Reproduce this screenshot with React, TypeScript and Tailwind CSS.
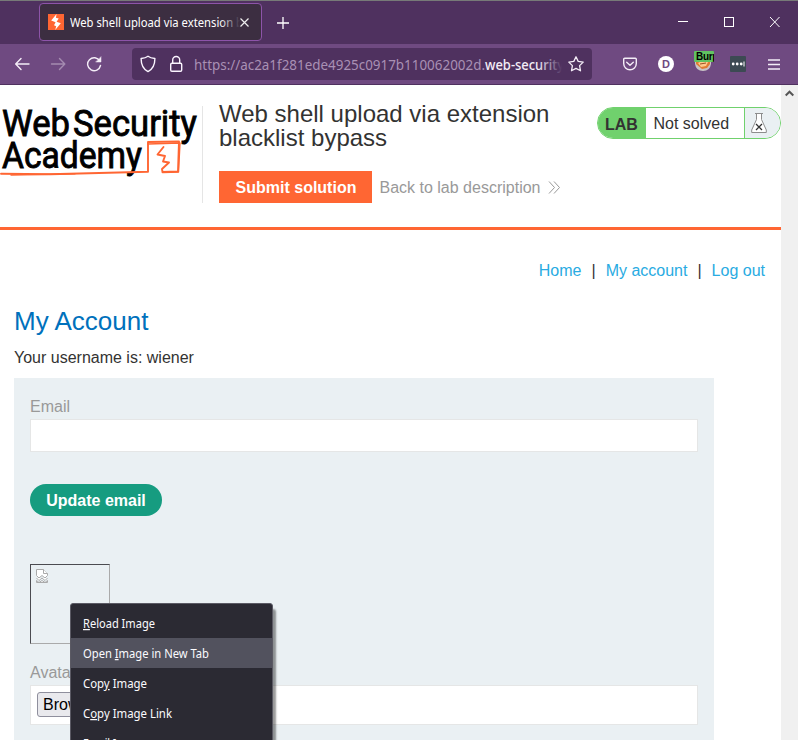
import React from "react";

const ui = "font-['Noto_Sans','Open_Sans',sans-serif]";

function Label({ text, width, size, className = "", weight = 400 }: { text: React.ReactNode; width: number; size: number; className?: string; weight?: number }) {
  return (
    <svg width={width + 2} height={20} className={"block shrink-0 overflow-visible " + className}>
      <text x="0" y="15" fontSize={size} fontWeight={weight} fill="currentColor" textLength={width} lengthAdjust="spacingAndGlyphs">
        {text}
      </text>
    </svg>
  );
}

function TabBar() {
  return (
    <div className="flex h-[44px] border-t border-[#777a78] bg-[#4f315f] pl-[39px]">
      <div className="mt-[2px] flex h-[38px] w-[223px] shrink-0 items-center rounded border border-[#8d54a9] bg-[#3c2e41] pl-[8px] text-white">
        <svg width="16" height="16" viewBox="0 0 16 16" className="mr-[6px] shrink-0">
          <rect width="16" height="16" fill="#ff6633" />
          <path d="M8.600 0 3.200 6.600 7.600 8.200 6 11.200l2.200 1L7.200 16 12.800 9.200 8.600 7.800 10.700 4.600 7.900 3.800z" fill="#fff" />
        </svg>
        <div className="relative w-[170px] shrink-0 overflow-hidden">
          <Label text="Web shell upload via extension b" width={173} size={12.3} />
          <div className="absolute inset-y-0 right-0 w-[20px] bg-linear-to-r from-transparent to-[#3c2e41]" />
        </div>
        <svg width="9" height="9" viewBox="0 0 9 9" className="shrink-0" stroke="#eee" strokeWidth="1.2"><path d="m.5.5 8 8m0-8-8 8" /></svg>
      </div>
      <svg width="12" height="12" className="mt-[16px] ml-[15px]" stroke="#fff" strokeWidth="1.3"><path d="M6 0v12M0 6h12" /></svg>
      <svg width="102" height="12" className="mt-[15px] mr-[18px] ml-auto" fill="none" stroke="#fff" shapeRendering="crispEdges">
        <path d="M0 5.500h10" /><path d="M46.500 1.500h9v9h-9z" />
        <path d="m92 1 9.500 10m0-10L92 11" shapeRendering="auto" />
      </svg>
    </div>
  );
}

function Toolbar() {
  return (
    <div className="flex h-[41px] items-center border-b border-[#4f315f] bg-[#6f4a81] pl-[15px] text-[#f4edf7]">
      <svg width="88" height="16" viewBox="0 0 88 16" fill="none" stroke="currentColor" strokeWidth="1.4" strokeLinecap="round" strokeLinejoin="round">
        <path d="M.7 8H14M6 2.500.7 8 6 13.500" />
        <path d="M36.500 8h13M44.500 2.500 49.800 8l-5.300 5.500" opacity=".4" />
        <path d="M84.800 5A6.500 6.500 0 1 0 85.500 9.500" /><path d="M86 1v5h-5z" fill="currentColor" strokeWidth=".5" />
      </svg>
      <div className="ml-[29px] flex h-[32px] w-[460px] items-center rounded bg-[#4f315f] pl-[8px]">
        <svg width="43" height="18" viewBox="0 0 43 18" fill="none" stroke="#fbf5ff" strokeWidth="1.4" strokeLinejoin="round">
          <path d="M8 1.200c2 1.500 4.200 2 6.900 2.300 0 6.200-1.900 10.600-6.900 13.100C3 14.100 1.100 9.700 1.100 3.500 3.800 3.200 6 2.700 8 1.200z" />
          <rect x="30.700" y="8.200" width="11" height="8" rx="1.200" /><path d="M32.700 8V5a3.500 3.500 0 0 1 7 0v3" />
        </svg>
        <div className="relative ml-[11px] flex w-[368px] shrink-0 overflow-hidden pt-[2px]">
          <Label text="https://ac2a1f281ede4925c0917b110062002d." width={291} size={14} className="mr-[-2px] text-[#a990b4]" />
          <Label text="web-security" width={79} size={14} weight={500} />
          <div className="absolute inset-y-0 right-0 w-[24px] bg-linear-to-r from-transparent to-[#4f315f]" />
        </div>
        <svg width="16" height="16" viewBox="0 0 16 16" className="ml-[6px] shrink-0" fill="none" stroke="currentColor" strokeWidth="1.3" strokeLinejoin="round">
          <path d="m8 .8 2.200 4.600 5 .7-3.600 3.500.9 5.200L8 12.400l-4.500 2.400.9-5.200L.8 6.100l5-.7z" />
        </svg>
      </div>
      <svg width="14" height="14" viewBox="0 0 14 14" className="ml-[31px]" fill="none" stroke="currentColor" strokeWidth="1.400" strokeLinecap="round" strokeLinejoin="round">
        <path d="M1.700 1.200h10.600q1 0 1 1V6.500A6.300 6.300 0 0 1 .7 6.500V2.200q0-1 1-1z" /><path d="M3.700 5.200 7 8.300l3.300-3.100" />
      </svg>
      <div className="ml-[21px] flex size-[16px] items-center justify-center rounded-full bg-white font-['Liberation_Sans',sans-serif] text-[11px] font-bold text-[#6f4a81]">D</div>
      <div className="relative ml-[20px] h-[32px] w-[20px]">
        <svg width="18" height="20" className="absolute top-[4px] left-0">
          <path d="M1 8h16v4q-1 7-8 7t-8-7z" fill="#c9c3c6" /><path d="M2 6h14v6l-3 4-5 1-6-5z" fill="#e07c32" />
          <path d="m4 11 4-2 6 1-2 4-5 1z" fill="#ffc98c" /><path d="m6 12 6-1" stroke="#9c4f24" fill="none" />
        </svg>
        <div className="relative mt-[3px] h-[11px] w-[20px] overflow-hidden rounded-[1px] bg-[#61c462] pl-[2px] font-['Liberation_Sans',sans-serif] text-[10px] leading-[12px] font-bold tracking-[-0.3px] text-black">Burp</div>
      </div>
      <svg width="16" height="16" className="ml-[16px]"><rect width="16" height="16" rx="1" fill="#3c4a53" /><g fill="#fff"><circle cx="3.200" cy="8" r="1.400" /><circle cx="7.200" cy="8" r="1.400" /><circle cx="11.200" cy="8" r="1.400" /><path d="M13.500 5.500h1v5h-1z" /></g></svg>
      <svg width="12" height="11" className="ml-[22px]" stroke="currentColor" strokeWidth="1.300"><path d="M0 1h12M0 5.500h12M0 10h12" /></svg>
    </div>
  );
}

function Logo() {
  return (
    <svg width="202" height="90" viewBox="0 0 202 90" className="mt-[10px] shrink-0 font-['Roboto','Liberation_Sans',sans-serif]">
      <g fill="#000" stroke="#000" strokeWidth=".9" fontWeight="400" fontSize="37.500">
        <text x="2" y="40.500" textLength="68" lengthAdjust="spacingAndGlyphs">Web</text>
        <text x="73" y="40.500" textLength="124" lengthAdjust="spacingAndGlyphs">Security</text>
        <text x="2" y="72.500" textLength="140" lengthAdjust="spacingAndGlyphs">Academy</text>
      </g>
      <g fill="none" stroke="#ff6633" strokeWidth="1.900" strokeLinejoin="round" strokeLinecap="round">
        <path d="M1 78.800 50 79.300 148 76.800V47l31-.5-1 30-15.500.5-.5-3 7-6.500-6-1 2-5.500-7.500-1.500 6-7.500" />
        <path d="M148 49l32-1-1.500 29-16 .5M11 80l64-1.300" strokeWidth="1.400" />
      </g>
    </svg>
  );
}

function LabHeader() {
  return (
    <header className="flex h-[145px] border-b-[3px] border-[#ff6633]">
      <Logo />
      <div className="mt-[21px] h-[97px] w-px bg-[#e5e5e5]" />
      <div className="ml-[16px] w-[378px] pt-[17px]">
        <h2 className="text-[24px] leading-[24px] text-[#333332]">Web shell upload via extension<br />blacklist bypass</h2>
        <div className="mt-[21px] flex h-[32px] items-center text-[16px]">
          <button className="h-[32px] w-[153px] bg-[#ff6633] pt-[2px] pl-[1px] font-bold text-white">Submit solution</button>
          <a className="ml-[7.5px] pt-[1px] whitespace-nowrap text-[#999]">Back to lab description</a>
          <svg width="13" height="13" className="ml-[8px]" fill="none" stroke="#999"><path d="m1 .5 5.500 6-5.500 6m5-12 5.500 6-5.500 6" /></svg>
        </div>
      </div>
      <div className="mt-[22px] flex h-[32px] w-[184px] overflow-hidden rounded-full border border-[#70d16d] text-[16px] leading-[31px] text-[#333332]">
        <div className="w-[48px] bg-[#70d16d] pl-[7px] font-bold leading-[33px]">LAB</div>
        <div className="w-[98px] bg-white pl-[7.5px]">Not solved</div>
        <div className="flex-1 border-l border-[#70d16d] bg-[#eaf0f3] pt-[5px] pl-[6px]">
          <svg width="16" height="20" viewBox="0 0 16 20" fill="#fff" stroke="#8d8d8d"><path d="M5.500 1v5.500L.7 17v2.500h14.600V17L10.500 6.500V1M4 .5h8" /><path d="m5 11 6 6m0-6-6 6" stroke="#333" strokeWidth="1.300" /></svg>
        </div>
      </div>
    </header>
  );
}

const items: [string, string, string, number][] = [
  ["", "R", "eload Image", 72], ["Open ", "I", "mage in New Tab", 126],
  ["Cop", "y", " Image", 64], ["C", "o", "py Image Link", 89], ["", "E", "mail Image…", 70],
];

function ContextMenu() {
  return (
    <div className={"absolute top-[518px] left-[70px] h-[180px] w-[203px] rounded-t-[3px] border border-[#5b5a64] bg-[#2b2a33] pt-[4px] text-[#fbfbfe] shadow-[3px_6px_2px_rgba(0,0,0,0.4)] " + ui}>
      {items.map(([a, key, b, width], i) => (
        <div key={i} className={"flex h-[30px] items-center pl-[12px] " + (i === 1 ? "bg-[#52525e]" : "")}>
          <Label width={width} size={12.3} text={<>{a}<tspan textDecoration="underline">{key}</tspan>{b}</>} />
        </div>
      ))}
    </div>
  );
}

function Account() {
  return (
    <main className="text-[16px] leading-[20px] text-[#333332]">
      <nav className="mt-[31px] mr-[16px] flex justify-end text-[#29abe2]">
        <a>Home</a><span className="mx-[10px] text-[#333332]">|</span><a>My account</a><span className="mx-[10px] text-[#333332]">|</span><a>Log out</a>
      </nav>
      <h1 className="mt-[24px] ml-[14px] text-[26px] leading-[32px] text-[#0071bc]">My Account</h1>
      <p className="mt-[11px] ml-[14px]">Your username is: wiener</p>
      <div className="mt-[10px] ml-[14px] h-[380px] w-[700px] bg-[#eaf0f3] px-[16px] pt-[19px]">
        <label className="block text-[#999]">Email</label>
        <div className="mt-[2px] h-[33px] border border-[#e5e6e6] bg-white" />
        <button className="mt-[32px] block h-[32px] w-[132px] rounded-full bg-[#169c80] pt-[2px] font-bold text-white">Update email</button>
        <div className="mt-[48px] h-[80px] w-[80px] border border-t-[#4b4b50] border-r-[#aaa] border-b-[#aaa] border-l-[#4b4b50] pt-[4px] pl-[5px]">
          <svg width="12" height="14" viewBox="0 0 12 14" fill="#fff" stroke="#aaa">
            <path d="M.5 6.500v-6h7l4 4v2L9 9 6 6.500 3 9z" /><path d="M7.500.5v4h4M.5 9l2.500 2.500L6 9l3 2.500L11.500 9M.5 11.500v2h11v-2L9 13.500l-3-2-3 2z" />
          </svg>
        </div>
        <label className="mt-[19px] block text-[#999]">Avatar:</label>
        <div className="mt-[2px] h-[40px] border border-[#e5e6e6] bg-white pt-[6px] pl-[6px]">
          <button className="block h-[25px] w-[80px] rounded-[3px] border border-[#8f8f9d] bg-[#e9e9ed] pt-[1px] pl-[5px] text-left text-black">Browse...</button>
        </div>
      </div>
    </main>
  );
}

export default function App() {
  return (
    <div className="h-[740px] w-[798px] overflow-hidden bg-white font-['Liberation_Sans',Arial,sans-serif]">
      <div className={ui}><TabBar /><Toolbar /></div>
      <div className="relative flex h-[655px] overflow-hidden">
        <div className="w-[781px] shrink-0"><LabHeader /><Account /></div>
        <div className="flex w-[17px] justify-center bg-[#f0f0f0] pt-[5px]">
          <svg width="9" height="7" fill="none" stroke="#555" strokeWidth="2"><path d="M.7 5.500 4.500 1.700l3.800 3.800" /></svg>
        </div>
        <ContextMenu />
      </div>
    </div>
  );
}
